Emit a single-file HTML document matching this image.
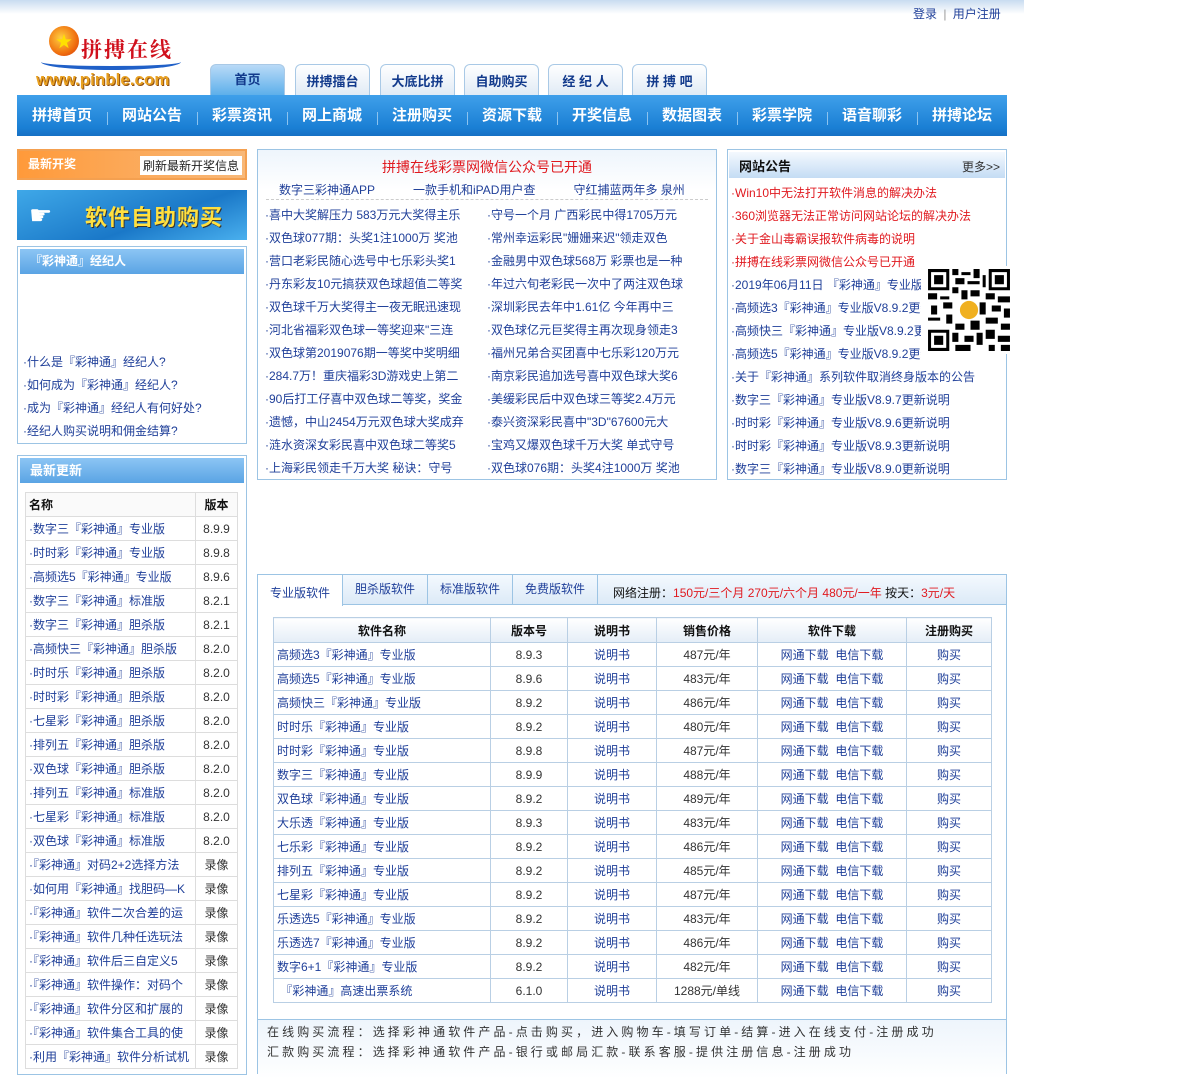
<!DOCTYPE html>
<html><head><meta charset="utf-8"><style>
*{margin:0;padding:0;box-sizing:border-box}
body{width:1200px;height:1063px;overflow:hidden;background:#fff;font-family:"Liberation Sans","Noto Sans CJK SC",sans-serif;font-size:12px;color:#333;position:relative}
.a{position:absolute}
a{color:#1f3f99;text-decoration:none}
.topbar{left:0;top:0;width:1024px;height:14px;background:linear-gradient(#c8dcf0,#fff)}
.tab{top:64px;height:32px;width:75px;border:1px solid #a9c9e6;border-bottom:none;border-radius:6px 6px 0 0;background:linear-gradient(#fff,#dfeaf5);text-align:center;line-height:34px;font-weight:bold;color:#123a8c;font-size:13px}
.tab.on{background:linear-gradient(#b9daf7,#5aaeea);color:#123a8c;line-height:30px}
.nav{left:17px;top:95px;width:990px;height:41px;background:linear-gradient(#3fa0ea,#1a7fd4 80%,#1670c4);}
.nav span{position:absolute;top:0;width:90px;text-align:center;line-height:42px;color:#fff;font-weight:bold;font-size:15px}
.nav i{position:absolute;top:17px;width:1px;height:13px;background:#8cc3ef}
.box{border:1px solid #9cc4e4}
.lh{height:25px;background:linear-gradient(#8cc5f4,#5aa4e4);color:#fff;font-weight:bold;line-height:25px;padding-left:10px;font-size:13px;margin:2px}
.ll{position:absolute;left:5px;font-size:12px}
table{border-collapse:collapse}
.lt td{border:1px solid #ddd;height:24px;font-size:12px;padding:0 3px}
.lt td:first-child{white-space:nowrap;overflow:hidden;max-width:170px}
.lt td:last-child{text-align:center}
.st td,.st th{border:1px solid #b9cfe4;height:24px;text-align:center;font-size:12px;color:#1f3f99}
.st th{background:linear-gradient(#fff,#e4edf7);color:#111;font-size:12px;height:25px}
.st td.n{text-align:left;padding-left:3px}
.st td.v,.st td.p{color:#333}
.nw{white-space:nowrap;overflow:hidden;font-size:12px;color:#1f3f99;position:absolute;width:204px}
.ra{position:absolute;left:3px;white-space:nowrap;overflow:hidden;width:190px;font-size:12px;color:#1f3f99}
.red{color:#e0191f!important}
</style></head><body>
<div class="a topbar"></div>
<div class="a" style="left:913px;top:5px;color:#1f3f99;font-size:12px">登录 <span style="color:#999;margin:0 3px">|</span> 用户注册</div>
<div class="a" style="left:36px;top:24px;width:150px;height:70px">
<div class="a" style="left:13px;top:2px;width:30px;height:30px;border-radius:50%;background:radial-gradient(circle at 40% 40%,#ffd040,#f07010 60%,#d03008);"></div>
<div class="a" style="left:20px;top:4px;color:#ffe000;font-size:16px">★</div>
<div class="a" style="left:5px;top:30px;width:140px;height:16px;border-radius:50%;border-bottom:4px solid #2060c8;"></div>
<div class="a" style="left:45px;top:10px;color:#d0101c;font-size:21px;font-weight:bold;font-family:'Noto Serif CJK SC',serif;letter-spacing:2px">拼搏在线</div>
<div class="a" style="left:0;top:46px;color:#e8a020;font-size:17px;font-weight:bold;text-shadow:1px 1px 0 #905010">www.pinble.com</div>
</div>
<div class="a tab on" style="left:210px">首页</div>
<div class="a tab" style="left:295px">拼搏擂台</div>
<div class="a tab" style="left:380px">大底比拼</div>
<div class="a tab" style="left:464px">自助购买</div>
<div class="a tab" style="left:548px">经 纪 人</div>
<div class="a tab" style="left:632px">拼 搏 吧</div>
<div class="a nav">
<span style="left:0">拼搏首页</span><i style="left:90px"></i>
<span style="left:90px">网站公告</span><i style="left:180px"></i>
<span style="left:180px">彩票资讯</span><i style="left:270px"></i>
<span style="left:270px">网上商城</span><i style="left:360px"></i>
<span style="left:360px">注册购买</span><i style="left:450px"></i>
<span style="left:450px">资源下载</span><i style="left:540px"></i>
<span style="left:540px">开奖信息</span><i style="left:630px"></i>
<span style="left:630px">数据图表</span><i style="left:720px"></i>
<span style="left:720px">彩票学院</span><i style="left:810px"></i>
<span style="left:810px">语音聊彩</span><i style="left:900px"></i>
<span style="left:900px">拼搏论坛</span>
</div>
<div class="a" style="left:17px;top:149px;width:230px;height:31px;border:2px solid #f4a050;background:linear-gradient(90deg,#ff9a3a,#f8b878);">
<div class="a" style="left:9px;top:4px;color:#fff;font-weight:bold;font-size:12px">最新开奖</div>
<div class="a" style="left:121px;top:5px;background:#fff;color:#222;font-size:12px;padding:1px 3px">刷新最新开奖信息</div></div>
<div class="a" style="left:17px;top:190px;width:230px;height:50px;background:linear-gradient(160deg,#3fa8e8,#1a78c8 60%,#4ab0ee)">
<div class="a" style="left:12px;top:10px;color:#fff;font-size:26px">☛</div>
<div class="a" style="left:68px;top:10px;color:#ffe040;font-size:22px;font-weight:bold;letter-spacing:1px;text-shadow:1px 1px 0 #333">软件自助购买</div></div>
<div class="a box" style="left:17px;top:246px;width:230px;height:198px">
<div class="lh" style="font-size:12px">『彩神通』经纪人</div>
<a class="ll" style="top:106px">·什么是『彩神通』经纪人?</a>
<a class="ll" style="top:129px">·如何成为『彩神通』经纪人?</a>
<a class="ll" style="top:152px">·成为『彩神通』经纪人有何好处?</a>
<a class="ll" style="top:175px">·经纪人购买说明和佣金结算?</a>
</div>
<div class="a box" style="left:17px;top:455px;width:230px;height:620px">
<div class="lh">最新更新</div>
<table class="lt a" style="left:7px;top:36px;width:213px">
<tr><td style="font-weight:bold;color:#111;background:#fafafa">名称</td><td style="font-weight:bold;color:#111;background:#fafafa;width:42px">版本</td></tr>
<tr><td><a>·数字三『彩神通』专业版</a></td><td>8.9.9</td></tr>
<tr><td><a>·时时彩『彩神通』专业版</a></td><td>8.9.8</td></tr>
<tr><td><a>·高频选5『彩神通』专业版</a></td><td>8.9.6</td></tr>
<tr><td><a>·数字三『彩神通』标准版</a></td><td>8.2.1</td></tr>
<tr><td><a>·数字三『彩神通』胆杀版</a></td><td>8.2.1</td></tr>
<tr><td><a>·高频快三『彩神通』胆杀版</a></td><td>8.2.0</td></tr>
<tr><td><a>·时时乐『彩神通』胆杀版</a></td><td>8.2.0</td></tr>
<tr><td><a>·时时彩『彩神通』胆杀版</a></td><td>8.2.0</td></tr>
<tr><td><a>·七星彩『彩神通』胆杀版</a></td><td>8.2.0</td></tr>
<tr><td><a>·排列五『彩神通』胆杀版</a></td><td>8.2.0</td></tr>
<tr><td><a>·双色球『彩神通』胆杀版</a></td><td>8.2.0</td></tr>
<tr><td><a>·排列五『彩神通』标准版</a></td><td>8.2.0</td></tr>
<tr><td><a>·七星彩『彩神通』标准版</a></td><td>8.2.0</td></tr>
<tr><td><a>·双色球『彩神通』标准版</a></td><td>8.2.0</td></tr>
<tr><td><a>·『彩神通』对码2+2选择方法</a></td><td>录像</td></tr>
<tr><td><a>·如何用『彩神通』找胆码—K</a></td><td>录像</td></tr>
<tr><td><a>·『彩神通』软件二次合差的运</a></td><td>录像</td></tr>
<tr><td><a>·『彩神通』软件几种任选玩法</a></td><td>录像</td></tr>
<tr><td><a>·『彩神通』软件后三自定义5</a></td><td>录像</td></tr>
<tr><td><a>·『彩神通』软件操作：对码个</a></td><td>录像</td></tr>
<tr><td><a>·『彩神通』软件分区和扩展的</a></td><td>录像</td></tr>
<tr><td><a>·『彩神通』软件集合工具的使</a></td><td>录像</td></tr>
<tr><td><a>·利用『彩神通』软件分析试机</a></td><td>录像</td></tr>
</table></div>
<div class="a box" style="left:257px;top:149px;width:460px;height:331px;background:linear-gradient(#eef5fc,#fff 40px)">
<div class="a" style="left:0;width:458px;top:7px;text-align:center;color:#e0191f;font-size:14px">拼搏在线彩票网微信公众号已开通</div>
<div class="a" style="left:21px;top:31px;color:#1f3f99;white-space:nowrap">数字三彩神通APP<span style="margin-left:38px">一款手机和iPAD用户查</span><span style="margin-left:38px">守红捕蓝两年多 泉州</span></div>
<div class="a" style="left:8px;top:49px;width:442px;border-top:1px dashed #ccc"></div>
<div class="nw" style="left:7px;top:54px;line-height:23px">·喜中大奖解压力 583万元大奖得主乐<br>·双色球077期：头奖1注1000万 奖池<br>·营口老彩民随心选号中七乐彩头奖1<br>·丹东彩友10元搞获双色球超值二等奖<br>·双色球千万大奖得主一夜无眠迅速现<br>·河北省福彩双色球一等奖迎来"三连<br>·双色球第2019076期一等奖中奖明细<br>·284.7万！重庆福彩3D游戏史上第二<br>·90后打工仔喜中双色球二等奖，奖金<br>·遗憾，中山2454万元双色球大奖成弃<br>·涟水资深女彩民喜中双色球二等奖5<br>·上海彩民领走千万大奖 秘诀：守号</div>
<div class="nw" style="left:229px;top:54px;line-height:23px">·守号一个月 广西彩民中得1705万元<br>·常州幸运彩民"姗姗来迟"领走双色<br>·金融男中双色球568万 彩票也是一种<br>·年过六旬老彩民一次中了两注双色球<br>·深圳彩民去年中1.61亿 今年再中三<br>·双色球亿元巨奖得主再次现身领走3<br>·福州兄弟合买团喜中七乐彩120万元<br>·南京彩民追加选号喜中双色球大奖6<br>·美缓彩民后中双色球三等奖2.4万元<br>·泰兴资深彩民喜中"3D"67600元大<br>·宝鸡又爆双色球千万大奖 单式守号<br>·双色球076期：头奖4注1000万 奖池</div>
</div>
<div class="a box" style="left:727px;top:149px;width:280px;height:331px">
<div class="a" style="left:1px;top:2px;width:276px;height:26px;background:linear-gradient(#f4f9fe,#c4dcf4)"></div>
<div class="a" style="left:11px;top:6px;font-weight:bold;color:#111;font-size:13px">网站公告</div>
<div class="a" style="right:6px;top:8px;color:#333;font-size:12px">更多&gt;&gt;</div>
<div class="ra" style="top:32px;line-height:23px;width:270px"><span class="red">·Win10中无法打开软件消息的解决办法</span><br><span class="red">·360浏览器无法正常访问网站论坛的解决办法</span><br><span class="red">·关于金山毒霸误报软件病毒的说明</span><br><span class="red">·拼搏在线彩票网微信公众号已开通</span></div>
<div class="ra" style="top:124px;line-height:23px">·2019年06月11日 『彩神通』专业版<br>·高频选3『彩神通』专业版V8.9.2更新<br>·高频快三『彩神通』专业版V8.9.2更新<br>·高频选5『彩神通』专业版V8.9.2更新</div>
<div class="ra" style="top:216px;line-height:23px;width:270px">·关于『彩神通』系列软件取消终身版本的公告<br>·数字三『彩神通』专业版V8.9.7更新说明<br>·时时彩『彩神通』专业版V8.9.6更新说明<br>·时时彩『彩神通』专业版V8.9.3更新说明<br>·数字三『彩神通』专业版V8.9.0更新说明</div>
</div>
<svg class="a" style="left:925px;top:266px" width="88" height="88" viewBox="0 0 29 29">
<rect width="29" height="29" fill="#fff"/>
<g fill="#000"><path d="M1 1h7v7h-7zM21 1h7v7h-7zM1 21h7v7h-7z"/></g>
<g fill="#fff"><path d="M2 2h5v5h-5zM22 2h5v5h-5zM2 22h5v5h-5z"/></g>
<g fill="#000"><path d="M3 3h3v3h-3zM23 3h3v3h-3zM3 23h3v3h-3z"/>
<path d="M9 1h2v2h-2zM12 2h3v1h-3zM16 1h2v3h-2zM10 4h3v2h-3zM14 5h4v1h-4zM19 3h1v4h-1zM9 7h2v2h-2zM12 8h2v3h-2zM15 8h3v2h-3zM1 9h3v2h-3zM5 10h3v1h-3zM20 9h3v2h-3zM24 10h4v2h-4zM2 13h2v3h-2zM6 12h3v2h-3zM18 12h2v4h-2zM22 13h3v2h-3zM26 14h2v3h-2zM1 17h4v1h-4zM7 16h2v3h-2zM20 17h4v2h-4zM25 19h3v2h-3zM10 19h3v2h-3zM15 18h3v3h-3zM9 22h2v3h-2zM13 23h3v2h-3zM17 22h2v4h-2zM20 21h3v3h-3zM24 23h4v2h-4zM21 26h2v2h-2zM25 26h3v2h-3zM10 26h5v2h-5z"/></g>
<circle cx="14.5" cy="14.5" r="3" fill="#f0b020"/>
</svg>
<div class="a box" style="left:257px;top:574px;width:750px;height:500px">
<div class="a" style="left:0;top:0;width:748px;height:30px;background:linear-gradient(#f4f9fe,#dceaf7);border-bottom:1px solid #9cc4e4"></div>
<div class="a" style="left:0;top:0;width:85px;height:31px;background:#fff;border-right:1px solid #9cc4e4;text-align:center;line-height:36px;color:#1f3f99">专业版软件</div>
<div class="a" style="left:85px;top:0;width:85px;height:30px;border-right:1px solid #9cc4e4;text-align:center;line-height:28px;color:#1f3f99">胆杀版软件</div>
<div class="a" style="left:170px;top:0;width:85px;height:30px;border-right:1px solid #9cc4e4;text-align:center;line-height:28px;color:#1f3f99">标准版软件</div>
<div class="a" style="left:255px;top:0;width:85px;height:30px;border-right:1px solid #9cc4e4;text-align:center;line-height:28px;color:#1f3f99">免费版软件</div>
<div class="a" style="left:355px;top:9px;color:#111;white-space:nowrap">网络注册：<span class="red">150元/三个月 270元/六个月 480元/一年</span> 按天：<span class="red">3元/天</span></div>
<table class="st a" style="left:15px;top:42px;width:719px">
<tr><th style="width:217px">软件名称</th><th style="width:77px">版本号</th><th style="width:89px">说明书</th><th style="width:101px">销售价格</th><th style="width:149px">软件下载</th><th>注册购买</th></tr>
<tr><td class="n">高频选3『彩神通』专业版</td><td class="v">8.9.3</td><td>说明书</td><td class="p">487元/年</td><td>网通下载 &nbsp;电信下载</td><td>购买</td></tr>
<tr><td class="n">高频选5『彩神通』专业版</td><td class="v">8.9.6</td><td>说明书</td><td class="p">483元/年</td><td>网通下载 &nbsp;电信下载</td><td>购买</td></tr>
<tr><td class="n">高频快三『彩神通』专业版</td><td class="v">8.9.2</td><td>说明书</td><td class="p">486元/年</td><td>网通下载 &nbsp;电信下载</td><td>购买</td></tr>
<tr><td class="n">时时乐『彩神通』专业版</td><td class="v">8.9.2</td><td>说明书</td><td class="p">480元/年</td><td>网通下载 &nbsp;电信下载</td><td>购买</td></tr>
<tr><td class="n">时时彩『彩神通』专业版</td><td class="v">8.9.8</td><td>说明书</td><td class="p">487元/年</td><td>网通下载 &nbsp;电信下载</td><td>购买</td></tr>
<tr><td class="n">数字三『彩神通』专业版</td><td class="v">8.9.9</td><td>说明书</td><td class="p">488元/年</td><td>网通下载 &nbsp;电信下载</td><td>购买</td></tr>
<tr><td class="n">双色球『彩神通』专业版</td><td class="v">8.9.2</td><td>说明书</td><td class="p">489元/年</td><td>网通下载 &nbsp;电信下载</td><td>购买</td></tr>
<tr><td class="n">大乐透『彩神通』专业版</td><td class="v">8.9.3</td><td>说明书</td><td class="p">483元/年</td><td>网通下载 &nbsp;电信下载</td><td>购买</td></tr>
<tr><td class="n">七乐彩『彩神通』专业版</td><td class="v">8.9.2</td><td>说明书</td><td class="p">486元/年</td><td>网通下载 &nbsp;电信下载</td><td>购买</td></tr>
<tr><td class="n">排列五『彩神通』专业版</td><td class="v">8.9.2</td><td>说明书</td><td class="p">485元/年</td><td>网通下载 &nbsp;电信下载</td><td>购买</td></tr>
<tr><td class="n">七星彩『彩神通』专业版</td><td class="v">8.9.2</td><td>说明书</td><td class="p">487元/年</td><td>网通下载 &nbsp;电信下载</td><td>购买</td></tr>
<tr><td class="n">乐透选5『彩神通』专业版</td><td class="v">8.9.2</td><td>说明书</td><td class="p">483元/年</td><td>网通下载 &nbsp;电信下载</td><td>购买</td></tr>
<tr><td class="n">乐透选7『彩神通』专业版</td><td class="v">8.9.2</td><td>说明书</td><td class="p">486元/年</td><td>网通下载 &nbsp;电信下载</td><td>购买</td></tr>
<tr><td class="n">数字6+1『彩神通』专业版</td><td class="v">8.9.2</td><td>说明书</td><td class="p">482元/年</td><td>网通下载 &nbsp;电信下载</td><td>购买</td></tr>
<tr><td class="n">&nbsp;『彩神通』高速出票系统</td><td class="v">6.1.0</td><td>说明书</td><td class="p">1288元/单线</td><td>网通下载 &nbsp;电信下载</td><td>购买</td></tr>
</table>
<div class="a" style="left:0;top:444px;width:748px;height:60px;border-top:1px solid #9cc4e4;background:linear-gradient(#eef5fc,#fff)"></div>
<div class="a" style="left:9px;top:447px;line-height:20px;color:#333;letter-spacing:3.1px;white-space:nowrap">在线购买流程：选择彩神通软件产品-点击购买，进入购物车-填写订单-结算-进入在线支付-注册成功<br>汇款购买流程：选择彩神通软件产品-银行或邮局汇款-联系客服-提供注册信息-注册成功</div>
</div>
</body></html>
